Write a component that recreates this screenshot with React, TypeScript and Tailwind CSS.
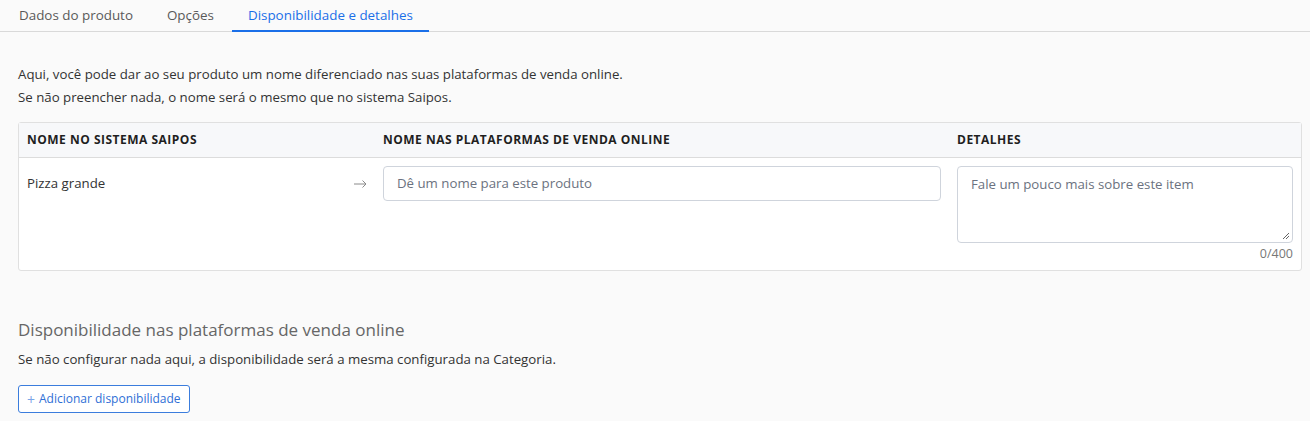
import React from "react";

export default function App() {
  return (
    <div className="min-h-[421px] w-[1310px] bg-[#fafafa] text-[#333] text-[13.25px]" style={{ fontFamily: '"Open Sans", "Noto Sans", sans-serif' }}>
      <div className="flex gap-[2px] border-b border-[#d9d9d9] pl-[3px] h-[32px]">
        <div className="px-4 flex items-center text-[#595959] text-[13.4px] h-[31px]">Dados do produto</div>
        <div className="px-4 flex items-center text-[#595959] text-[13.4px] h-[31px]">Opções</div>
        <div className="px-4 flex items-center text-[#1a6fe8] text-[13.4px] h-[32px] border-b-2 border-[#1a6fe8] mb-[-1px]">Disponibilidade e detalhes</div>
      </div>

      <div className="pl-[18px] pr-[8px]">
        <p className="mt-[31px] leading-[23px]">
          Aqui, você pode dar ao seu produto um nome diferenciado nas suas plataformas de venda online.
          <br />
          Se não preencher nada, o nome será o mesmo que no sistema Saipos.
        </p>

        <div className="mt-[13px] border border-[#e0e0e0] rounded-[3px] bg-white">
          <div className="grid grid-cols-[356px_574px_1fr] h-[35px] bg-[#f7f8fa] border-b border-[#dcdcdc] items-center text-[12px] font-bold tracking-[0.5px] text-[#1f1f1f]">
            <div className="px-[8px]">NOME NO SISTEMA SAIPOS</div>
            <div className="px-[8px]">NOME NAS PLATAFORMAS DE VENDA ONLINE</div>
            <div className="px-[8px]">DETALHES</div>
          </div>
          <div className="grid grid-cols-[356px_574px_1fr] pt-[8px] pb-[8px]">
            <div className="px-[8px] flex justify-between h-[36px] items-center">
              <span>Pizza grande</span>
              <svg width="13" height="8" viewBox="0 0 13 8">
                <path d="M0 4 H12 M8.5 0.5 L12 4 L8.5 7.5" stroke="#8a8a8a" strokeWidth="1" fill="none" />
              </svg>
            </div>
            <div className="px-[8px]">
              <div className="h-[35px] border border-[#cfd4dc] rounded-[4px] flex items-center px-[13px] text-[#6b7280]">Dê um nome para este produto</div>
            </div>
            <div className="px-[8px]">
              <div className="relative h-[77px] border border-[#cfd4dc] rounded-[4px] px-[13px] pt-[8px] text-[#6b7280]">
                Fale um pouco mais sobre este item
                <svg className="absolute right-[2px] bottom-[2px]" width="8" height="8" viewBox="0 0 8 8">
                  <path d="M1 7 L7 1 M4 7 L7 4" stroke="#666" strokeWidth="1" />
                </svg>
              </div>
              <div className="text-right text-[12.5px] text-[#777] mt-[3px] leading-[16px]">0/400</div>
            </div>
          </div>
        </div>

        <h2 className="mt-[46px] text-[17px] text-[#666] leading-[26px]">Disponibilidade nas plataformas de venda online</h2>
        <p className="mt-[7px] leading-[18px]">Se não configurar nada aqui, a disponibilidade será a mesma configurada na Categoria.</p>
        <button className="mt-[17px] h-[28px] px-[8px] border border-[#3b7ddd] rounded-[3px] text-[#2f6fd6] text-[12px] bg-white flex items-center gap-[4px]">
          <span className="text-[#7aa6e8] text-[14px]">+</span>Adicionar disponibilidade
        </button>
      </div>
    </div>
  );
}
